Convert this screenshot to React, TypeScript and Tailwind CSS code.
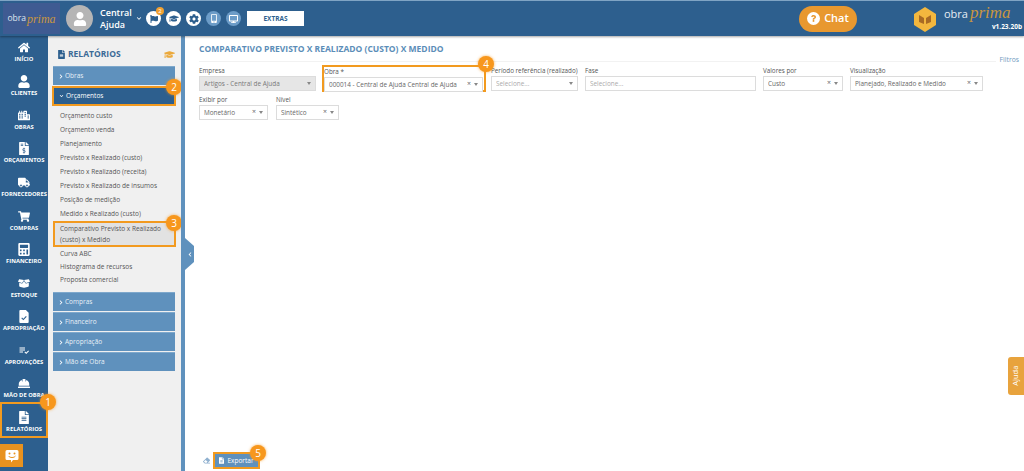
import React from "react";
import { FaHome, FaUser, FaCity, FaFileInvoiceDollar, FaTruck, FaShoppingCart, FaCalculator, FaBoxOpen, FaHardHat, FaFileAlt, FaGraduationCap, FaFlag, FaCog, FaMobileAlt, FaDesktop, FaChevronRight, FaChevronDown, FaChevronLeft, FaEraser, FaQuestion } from "react-icons/fa";
import { MdPlaylistAddCheck } from "react-icons/md";

const font = "font-['Open_Sans',sans-serif]";

function FileCheck({ className }: { className?: string }) {
  return (
    <svg viewBox="0 0 12 14" className={className}>
      <path d="M1 0h7l3 3v10a1 1 0 0 1-1 1H2a1 1 0 0 1-1-1V1a1 1 0 0 1 1-1z" fill="currentColor" />
      <path d="M3.500 8.500l1.800 1.800 3.200-3.500" stroke="#2d5f8e" strokeWidth="1.200" fill="none" />
    </svg>
  );
}

function Num({ n, className }: { n: number; className: string }) {
  return (
    <span className={`absolute w-4 h-4 rounded-full bg-[#f7971d] text-white text-[10px] flex items-center justify-center shadow-[0_0_3px_rgba(247,151,29,0.8)] ${className}`}>
      {n}
    </span>
  );
}

const nav: [React.ComponentType<{ className?: string }>, string, string][] = [
  [FaHome, "INÍCIO", "h-[28px]"],
  [FaUser, "CLIENTES", "h-[34px]"],
  [FaCity, "OBRAS", "h-[34px]"],
  [FaFileInvoiceDollar, "ORÇAMENTOS", "h-[33px]"],
  [FaTruck, "FORNECEDORES", "h-[34px]"],
  [FaShoppingCart, "COMPRAS", "h-[34px]"],
  [FaCalculator, "FINANCEIRO", "h-[33px]"],
  [FaBoxOpen, "ESTOQUE", "h-[34px]"],
  [FileCheck, "APROPRIAÇÃO", "h-[33px]"],
  [MdPlaylistAddCheck, "APROVAÇÕES", "h-[34px]"],
  [FaHardHat, "MÃO DE OBRA", "h-[33px]"],
];

function NavItem({ Icon, label, h }: { Icon: React.ComponentType<{ className?: string }>; label: string; h: string }) {
  return (
    <div className={`${h} flex flex-col items-center justify-end shrink-0`}>
      <Icon className="w-[12px] h-[13px] text-white" />
      <span className="text-[5.8px] font-bold text-white leading-[9px] mt-[1px] whitespace-nowrap">{label}</span>
    </div>
  );
}

function Acc({ label, className = "" }: { label: string; className?: string }) {
  return (
    <div className={`w-[122px] h-[19px] bg-[#5f91bd] border-t border-[#7ea8cc] flex items-center pl-[6px] gap-[2px] text-[6.5px] text-[#e8f0f7] ${className}`}>
      <FaChevronRight className="w-[4px] h-[5px] text-white" />
      {label}
    </div>
  );
}

function Item({ label, h = "h-[14px]" }: { label: string; h?: string }) {
  return <div className={`${h} flex items-center pl-[7px] text-[6.5px] text-[#555] whitespace-nowrap`}>{label}</div>;
}

function Field({ label, value, w, x = true, disabled = false, placeholder = false, arrow = true, className = "" }: {
  label: string; value: string; w: string; x?: boolean; disabled?: boolean; placeholder?: boolean; arrow?: boolean; className?: string;
}) {
  return (
    <div className={`${w} shrink-0 flex flex-col ${className}`}>
      <span className="text-[6.3px] leading-[10px] text-[#555] whitespace-nowrap h-[10px]">{label}</span>
      <div className={`h-[15px] border border-[#dcdcdc] flex items-center pl-[4px] pr-[4px] text-[6.4px] whitespace-nowrap ${disabled ? "bg-[#e6e6e6] text-[#777]" : "bg-white"} ${placeholder ? "text-[#aaa]" : disabled ? "" : "text-[#666]"}`}>
        <span className="flex-1 overflow-hidden">{value}</span>
        {x && <span className="text-[7px] text-[#666] mr-[3px]">×</span>}
        {arrow && <span className="w-0 h-0 border-l-[2.5px] border-r-[2.5px] border-t-[3px] border-l-transparent border-r-transparent border-t-[#888]" />}
      </div>
    </div>
  );
}

function Circle({ children, light = false }: { children: React.ReactNode; light?: boolean }) {
  return (
    <span className={`relative w-[15px] h-[15px] rounded-full flex items-center justify-center shrink-0 ${light ? "bg-[#6c9cc8]" : "bg-white"}`}>
      {children}
    </span>
  );
}

export default function App() {
  return (
    <div className={`w-[1024px] h-[471px] overflow-hidden flex flex-col bg-white ${font} relative`}>
      {/* header */}
      <header className="h-[36px] shrink-0 bg-[#2d5f8e] border-t border-[#7fa4c4] flex items-center shadow-[0_1px_2px_rgba(0,0,0,0.35)] z-10">
        <div className="ml-[3px] w-[57px] h-[31px] bg-[#3f5b92] flex items-center justify-center gap-[1px] whitespace-nowrap">
          <span className="text-[8.5px] text-[#dfe6ef]">obra</span>
          <span className="text-[12px] italic font-['Liberation_Serif',serif] text-[#c9963f]">prima</span>
        </div>
        <div className="ml-[6px] w-[27px] h-[27px] rounded-full bg-[#b5b5b5] flex items-center justify-center overflow-hidden">
          <FaUser className="w-[14px] h-[14px] text-white" />
        </div>
        <div className="ml-[7px] w-[36px] text-[9px] leading-[12px] font-semibold text-white">Central Ajuda</div>
        <FaChevronDown className="w-[6px] h-[5px] text-white" />
        <div className="ml-[4px] flex items-center gap-[5px]">
          <Circle>
            <FaFlag className="w-[8px] h-[8px] text-[#2d5f8e]" />
            <span className="absolute -top-[4px] -right-[3px] w-[8px] h-[8px] rounded-full bg-[#f0a030] text-white text-[6px] flex items-center justify-center">2</span>
          </Circle>
          <Circle><FaGraduationCap className="w-[10px] h-[9px] text-[#2d5f8e]" /></Circle>
          <Circle><FaCog className="w-[10px] h-[10px] text-[#2d5f8e]" /></Circle>
          <Circle light><FaMobileAlt className="w-[8px] h-[9px] text-white" /></Circle>
          <Circle light><FaDesktop className="w-[9px] h-[8px] text-white" /></Circle>
        </div>
        <div className="ml-[6px] w-[57px] h-[15px] bg-white flex items-center justify-center text-[6.5px] font-bold text-[#2d5f8e]">EXTRAS</div>
        <div className="ml-[495px] w-[58px] h-[26px] rounded-full bg-[#e8982f] flex items-center justify-center gap-[4px]">
          <span className="w-[13px] h-[13px] rounded-full bg-white flex items-center justify-center">
            <FaQuestion className="w-[7px] h-[7px] text-[#e8982f]" />
          </span>
          <span className="text-[11px] font-semibold text-white">Chat</span>
        </div>
        <div className="ml-[56px] flex items-start">
          <svg width="24" height="25" viewBox="0 0 24 25" className="mt-[1px]">
            <polygon points="12,0 23,7 23,18 12,25 1,18 1,7" fill="#f3b73e" />
            <polygon points="6,8 11,11 11,17 6,15" fill="#a86a24" />
            <polygon points="18,8 13,11 13,17 18,15" fill="#a86a24" />
          </svg>
          <div className="ml-[7px] flex flex-col items-end w-[78px]">
            <div className="flex items-baseline gap-[2px] leading-[14px] whitespace-nowrap self-start">
              <span className="text-[11px] text-[#e6edf4]">obra</span>
              <span className="text-[17px] italic font-['Liberation_Serif',serif] text-[#c9963f]">prima</span>
            </div>
            <span className="text-[6.5px] font-bold text-white leading-[8px] mt-[2px]">v1.23.20b</span>
          </div>
        </div>
      </header>

      <div className="flex-1 flex min-h-0">
        {/* nav */}
        <nav className="w-[48px] shrink-0 bg-[#2d5f8e] flex flex-col">
          {nav.map(([I, l, h]) => <NavItem key={l} Icon={I} label={l} h={h} />)}
          <div className="relative mt-[2px] w-[48px] h-[36px] border-2 border-[#f29a1f] flex flex-col items-center justify-end pb-[2px]">
            <FaFileAlt className="w-[10px] h-[13px] text-white" />
            <span className="text-[5.8px] font-bold text-white leading-[9px] mt-[1px]">RELATÓRIOS</span>
            <Num n={1} className="-top-[10px] -right-[10px] z-10" />
          </div>
          <div className="mt-[6px] w-[23px] h-[23px] bg-[#e8921f] flex items-center justify-center">
            <svg width="14" height="14" viewBox="0 0 14 14">
              <path d="M2 1h10a1.500 1.500 0 0 1 1.500 1.500v7A1.500 1.500 0 0 1 12 11H8l-2 2.500V11H2A1.500 1.500 0 0 1 .5 9.500v-7A1.500 1.500 0 0 1 2 1z" fill="#fff" />
              <circle cx="4.500" cy="4.500" r="1" fill="#e8921f" />
              <circle cx="9.500" cy="4.500" r="1" fill="#e8921f" />
              <path d="M3.500 7c1.500 2 5.500 2 7 0" stroke="#e8921f" strokeWidth="1" fill="none" />
            </svg>
          </div>
        </nav>

        {/* panel */}
        <aside className="w-[133px] shrink-0 bg-[#f0f0f0] flex flex-col pl-[5px]">
          <div className="h-[30px] pt-[6px] flex items-center pl-[5px] pr-[6px]">
            <FaFileAlt className="w-[7px] h-[9px] text-[#2d5f8e]" />
            <span className="ml-[3px] text-[8.5px] font-bold text-[#3b6a96] flex-1">RELATÓRIOS</span>
            <FaGraduationCap className="w-[11px] h-[9px] text-[#eba93c]" />
          </div>
          <Acc label="Obras" />
          <div className="relative mt-[1px] -ml-[1px] w-[124px] h-[20px] bg-[#2d5f8e] border-2 border-[#f29a1f] flex items-center pl-[5px] gap-[2px] text-[6.5px] text-white">
            <FaChevronDown className="w-[5px] h-[4px] text-white" />
            Orçamentos
            <Num n={2} className="-top-[9px] -right-[8px]" />
          </div>
          <div className="pt-[3px]">
            {["Orçamento custo", "Orçamento venda", "Planejamento", "Previsto x Realizado (custo)", "Previsto x Realizado (receita)", "Previsto x Realizado de insumos", "Posição de medição", "Medido x Realizado (custo)"].map((t) => <Item key={t} label={t} />)}
          </div>
          <div className="relative w-[123px] h-[26px] bg-[#e2e2e2] border-2 border-[#f29a1f] pl-[5px] pr-[8px] flex items-center text-[6.5px] leading-[11px] text-[#555]">
            Comparativo Previsto x Realizado (custo) x Medido
            <Num n={3} className="-top-[8px] -right-[8px]" />
          </div>
          <div className="mb-[5px]">
            {["Curva ABC", "Histograma de recursos"].map((t) => <Item key={t} label={t} h="h-[13px]" />)}
            <Item label="Proposta comercial" />
          </div>
          <div className="flex flex-col gap-[1px]">
            {["Compras", "Financeiro", "Apropriação", "Mão de Obra"].map((t) => <Acc key={t} label={t} />)}
          </div>
        </aside>

        {/* splitter */}
        <div className="w-[4px] shrink-0 bg-[#5f91bd] relative">
          <div className="absolute top-[202px] left-[4px] w-[9px] h-[32px] bg-[#5f91bd] [clip-path:polygon(0_0,100%_25%,100%_75%,0_100%)] flex items-center justify-center">
            <FaChevronLeft className="w-[4px] h-[5px] text-white" />
          </div>
        </div>

        {/* content */}
        <main className="flex-1 min-w-0 flex flex-col pl-[14px] pt-[6px] relative">
          <h1 className="text-[8.5px] font-bold text-[#5b8db8] leading-[14px] whitespace-nowrap">COMPARATIVO PREVISTO X REALIZADO (CUSTO) X MEDIDO</h1>
          <div className="mt-[5px] h-[1px] mr-[28px] bg-[#f2f2f2]" />
          <div className="absolute right-[5px] top-[19px] text-[6.8px] text-[#6f9ac0] leading-[10px]">Filtros</div>
          <div className="mt-[4px] flex">
            <Field label="Empresa" value="Artigos - Central de Ajuda" w="w-[117px]" x={false} disabled />
            <div className="relative ml-[6px] w-[164px] h-[27px] -mt-[1px] border-2 border-[#f29a1f] -mb-[1px] shrink-0">
              <Field label="Obra *" value="000014 - Central de Ajuda Central de Ajuda" w="w-[159px]" />
              <Num n={4} className="-top-[11px] -right-[10px]" />
            </div>
            <Field label="Período referência (realizado)" value="Selecione..." w="w-[87px]" x={false} placeholder className="ml-[5px]" />
            <Field label="Fase" value="Selecione..." w="w-[171px]" x={false} arrow={false} placeholder className="ml-[7px]" />
            <Field label="Valores por" value="Custo" w="w-[80px]" className="ml-[7px]" />
            <Field label="Visualização" value="Planejado, Realizado e Medido" w="w-[133px]" className="ml-[7px]" />
          </div>
          <div className="mt-[4px] flex gap-[8px]">
            <Field label="Exibir por" value="Monetário" w="w-[69px]" />
            <Field label="Nível" value="Sintético" w="w-[63px]" />
          </div>
          <div className="mt-auto mb-[2px] flex items-center ml-[4px] gap-[3px]">
            <FaEraser className="w-[7px] h-[7px] text-[#8fb0cf]" />
            <div className="relative h-[17px] w-[47px] border-2 border-[#f29a1f] bg-[#5f91bd] flex items-center justify-center gap-[3px] text-[6.5px] text-white">
              <FaFileAlt className="w-[5px] h-[7px] text-white" />
              Exportar
              <Num n={5} className="-top-[9px] -right-[8px]" />
            </div>
          </div>
          <div className="absolute right-0 top-[321px] w-[16px] h-[38px] bg-[#e8a33d] rounded-l-[3px] flex items-center justify-center">
            <span className="-rotate-90 text-[7.5px] text-white">Ajuda</span>
          </div>
        </main>
      </div>
    </div>
  );
}
